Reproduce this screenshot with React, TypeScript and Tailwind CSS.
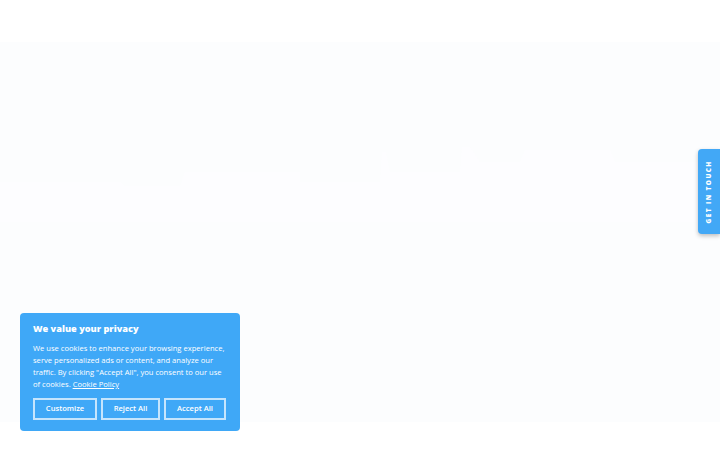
import React from "react";

export default function App() {
  return (
    <div className="relative h-[450px] w-[720px] overflow-hidden bg-white" style={{ fontFamily: "'Open Sans', Lato, sans-serif" }}>
      <header className="h-[42px] bg-white" />
      <section className="relative h-[380px] bg-[#fcfdfe]">
        {/* faint skyline silhouette of the hero image */}
        <svg className="absolute left-0 top-[100px]" width="720" height="80" viewBox="0 0 720 80">
          <path
            d="M0 40 L120 40 L125 44 L180 44 L185 30 L300 30 L300 40 L380 40 L382 10 L386 10 L390 30 L460 30 L462 5 L470 5 L480 20 L520 20 L525 8 L610 8 L615 20 L700 20 L700 80 L0 80 Z"
            fill="#fdfdff"
          />
        </svg>
      </section>

      {/* cookie consent */}
      <div className="absolute left-[20px] top-[313px] w-[220px] rounded-[4px] bg-[#3fa8f7] px-[13px] pb-[11px] pt-[10px] text-white">
        <h2 className="text-[9.2px] font-extrabold leading-[12px]">We value your privacy</h2>
        <p className="mt-[7px] text-[7.6px] leading-[12px]">
          We use cookies to enhance your browsing experience, serve personalized ads or content, and analyze our traffic. By clicking "Accept All", you consent to our use of cookies.{" "}
          <a className="underline">Cookie Policy</a>
        </p>
        <div className="mt-[8px] flex gap-[4px]">
          <button className="h-[22px] w-[64px] border-2 border-white/70 text-[7.6px] font-semibold">Customize</button>
          <button className="h-[22px] w-[59px] border-2 border-white/70 text-[7.6px] font-semibold">Reject All</button>
          <button className="h-[22px] w-[62px] border-2 border-white/70 text-[7.6px] font-semibold">Accept All</button>
        </div>
      </div>

      {/* get in touch tab */}
      <div className="absolute right-0 top-[149px] flex h-[85px] w-[22px] items-center justify-center rounded-l-[4px] bg-[#42a8f6] shadow-[0_2px_4px_rgba(0,0,0,0.25)]">
        <span className="-rotate-90 whitespace-nowrap text-[6.5px] font-extrabold tracking-[1.4px] text-white">GET IN TOUCH</span>
      </div>
    </div>
  );
}
